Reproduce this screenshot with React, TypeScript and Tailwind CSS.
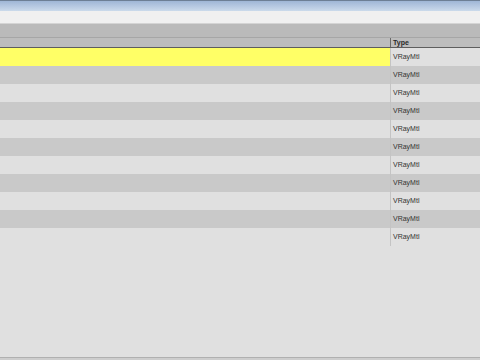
const ROWS = 11;

export default function App() {
  return (
    <div className="w-[480px] h-[360px] flex flex-col bg-[#e0e0e0] overflow-hidden font-['Liberation_Sans',Arial,sans-serif]">
      {/* title bar */}
      <div className="h-[11px] shrink-0 border-t border-[#6d7f95] bg-gradient-to-b from-[#9fb6d6] to-[#cbdaeb]" />
      {/* toolbar strip */}
      <div className="h-[13px] shrink-0 bg-[#f0f0f0] border-b border-[#d4d4d4]" />
      <div className="h-[14px] shrink-0 bg-[#bababa] border-b border-[#a6a6a6]" />
      {/* column header */}
      <div className="h-[9px] shrink-0 flex bg-[#bdbdbd] border-b border-[#5e5e5e] box-content">
        <div className="w-[391px] border-r border-[#6a6a6a]" />
        <div className="flex-1 pl-[2px] text-[7px] leading-[10px] font-bold text-[#2a2a2a]">Type</div>
      </div>
      {/* rows */}
      <div className="flex flex-col">
        {Array.from({ length: ROWS }).map((_, i) => (
          <div
            key={i}
            className={`h-[18px] flex ${i % 2 === 1 ? 'bg-[#c9c9c9]' : 'bg-[#e0e0e0]'}`}
          >
            <div className={`w-[391px] border-r border-[#c4c4c4] ${i === 0 ? 'bg-[#ffff66]' : ''}`} />
            <div className="flex-1 pl-[2px] text-[7px] leading-[18px] text-[#333333]">VRayMtl</div>
          </div>
        ))}
      </div>
      <div className="flex-1" />
      <div className="h-[3px] shrink-0 border-t border-[#b0b0b0] bg-[#cdcdcd]" />
    </div>
  );
}
